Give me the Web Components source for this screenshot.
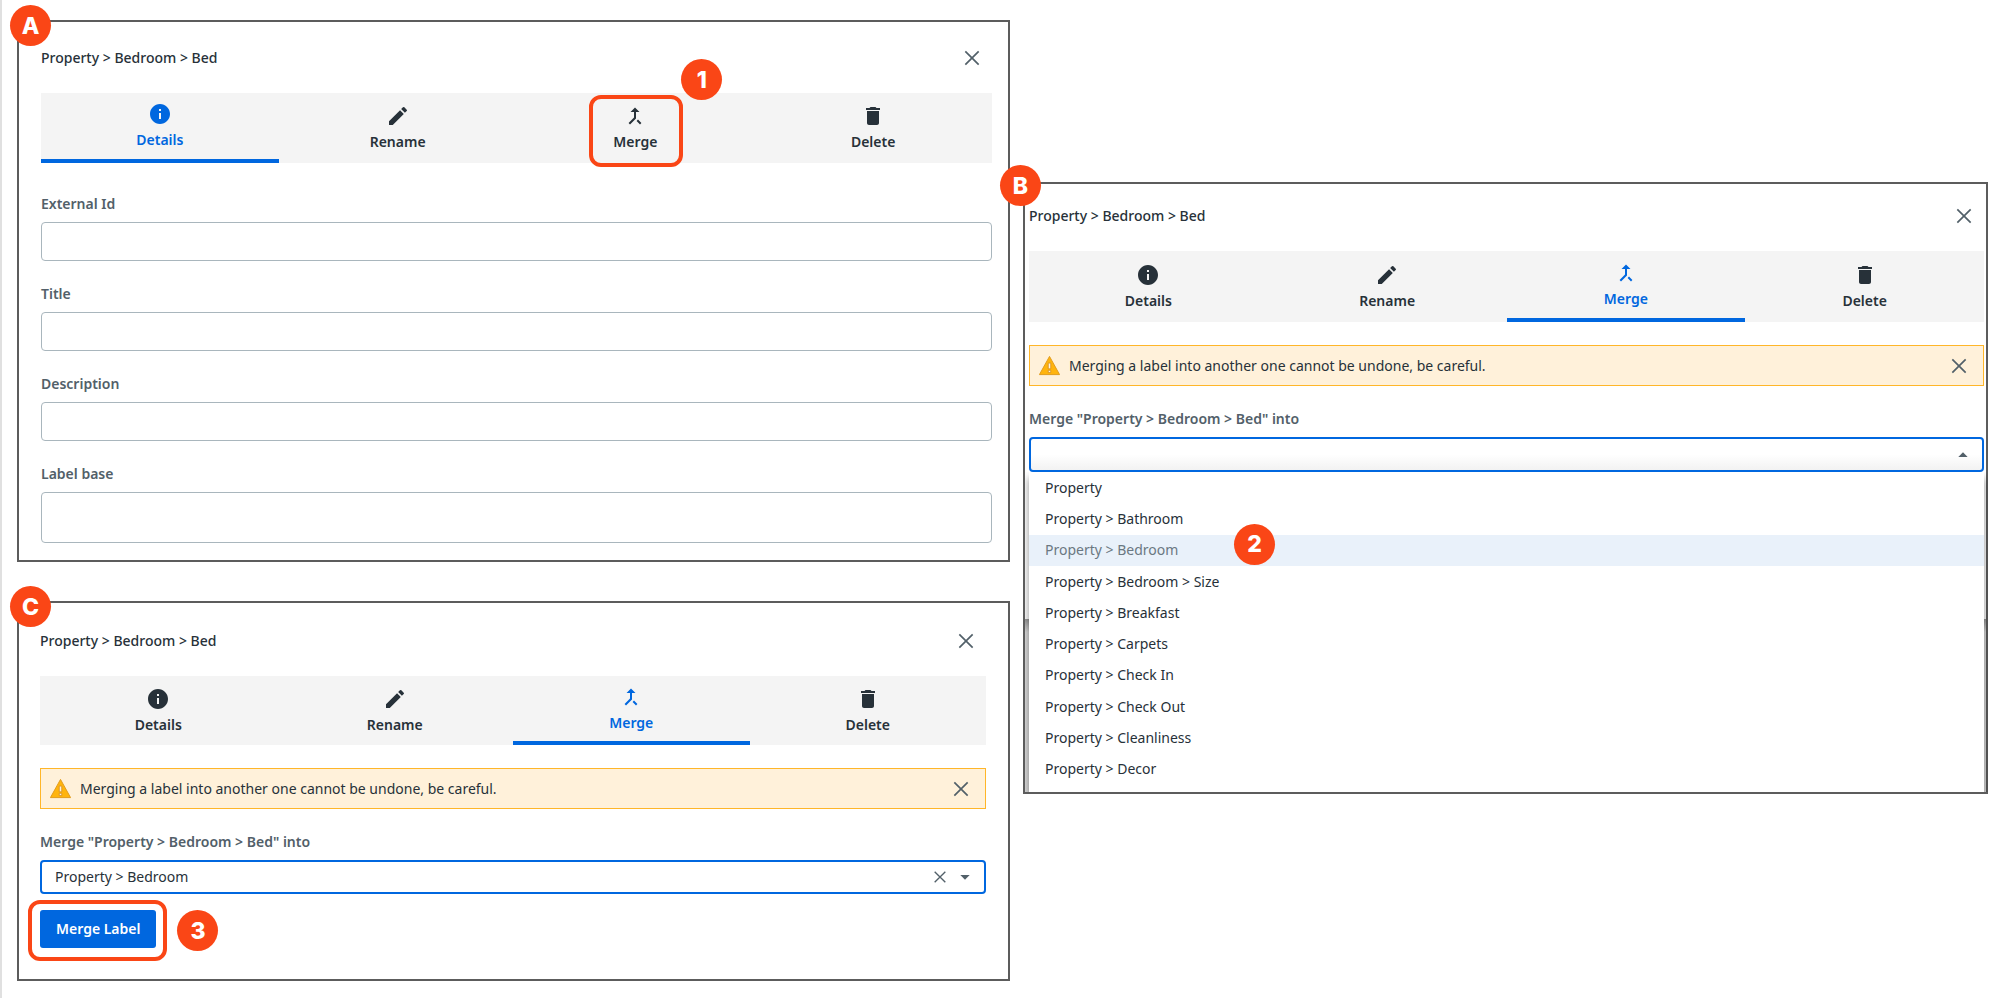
<!DOCTYPE html>
<html lang="en">
<head>
<meta charset="utf-8">
<title>Merging a label</title>
<style>
  body {
    margin: 0;
    font: 14px/20px "Noto Sans", "Open Sans", sans-serif;
    color: #273139;
    background: #fff;
  }
</style>
</head>
<body>
<merge-guide></merge-guide>

<script>
const ICONS = {
  info: '<path fill="currentColor" d="M12 2C6.48 2 2 6.48 2 12s4.48 10 10 10 10-4.48 10-10S17.52 2 12 2zm1 15h-2v-6h2v6zm0-8h-2V7h2v2z"/>',
  edit: '<path fill="currentColor" d="M3 17.25V21h3.75L17.81 9.94l-3.75-3.75L3 17.25zM20.71 7.04a1 1 0 0 0 0-1.41l-2.34-2.34a1 1 0 0 0-1.41 0l-1.83 1.83 3.75 3.75 1.83-1.83z"/>',
  merge: '<path fill="currentColor" d="M17 20.41L18.41 19 15 15.59 13.59 17 17 20.41zM7.5 8H11v5.59L5.59 19 7 20.41l6-6V8h3.5L12 3.5 7.5 8z"/>',
  trash: '<path fill="currentColor" d="M6 19c0 1.1.9 2 2 2h8c1.1 0 2-.9 2-2V7H6v12zM19 4h-3.5l-1-1h-5l-1 1H5v2h14V4z"/>',
  close: '<path fill="none" stroke="currentColor" stroke-width="2" d="M4 4l16 16M20 4L4 20"/>',
  down: '<path fill="currentColor" d="M5 9h14l-7 7z"/>',
  up: '<path fill="currentColor" d="M5 15h14l-7-7z"/>',
  warning: '<path fill="#ffb40e" stroke="#e09a1a" d="M12 2.5L22.5 21.5h-21z"/><path fill="#fff3db" stroke="#d18a1c" stroke-width=".8" d="M10.7 9.5h2.6v6h-2.6zM10.7 17h2.6v2.4h-2.6z"/>'
};

function define(name, render) {
  customElements.define(name, class extends HTMLElement {
    connectedCallback() {
      if (this.shadowRoot) return;
      this.attachShadow({ mode: 'open' }).innerHTML = render(this);
    }
  });
}

const attr = (el, name) => (el.getAttribute(name) || '').replace(/&/g, '&amp;').replace(/"/g, '&quot;').replace(/>/g, '&gt;');

define('ui-icon', el => `
  <style>
    :host { display: block; flex: none; width: var(--size, 24px); height: var(--size, 24px); }
    svg { display: block; width: 100%; height: 100%; }
  </style>
  <svg viewBox="0 0 24 24" aria-hidden="true">${ICONS[el.getAttribute('name')]}</svg>`);

define('step-badge', () => `
  <style>
    :host {
      display: flex; align-items: center; justify-content: center;
      width: 41px; height: 41px; border-radius: 50%;
      background: #fa4616; color: #fff;
      font: 800 23px/24px Inter, "Liberation Sans", sans-serif;
    }
  </style>
  <slot></slot>`);

define('icon-button', el => `
  <style>
    :host { display: block; flex: none; }
    button {
      display: flex; align-items: center; justify-content: center;
      width: var(--button-width, 40px); height: var(--button-height, 40px);
      padding: 0; border: 0; background: none; color: #526069; cursor: pointer;
    }
    ui-icon { --size: var(--glyph, 20px); }
  </style>
  <button type="button" aria-label="${attr(el, 'label')}"><ui-icon name="${el.getAttribute('icon')}"></ui-icon></button>`);

define('label-panel', el => `
  <style>
    :host { display: block; position: relative; box-sizing: border-box; border: 2px solid #5c5c5c; }
    .body { display: flex; flex-direction: column; box-sizing: border-box; height: 100%; padding: var(--panel-padding); }
    header { display: flex; align-items: center; justify-content: space-between; margin-bottom: 15px; }
    h2 { margin: 0; font-size: 14px; font-weight: 500; line-height: 20px; }
    step-badge { position: absolute; z-index: 3; left: var(--badge-left, -9px); top: var(--badge-top, -17px); }
  </style>
  <step-badge>${attr(el, 'step')}</step-badge>
  <div class="body">
    <header>
      <h2>Property &gt; Bedroom &gt; Bed</h2>
      <icon-button icon="close" label="Close"></icon-button>
    </header>
    <slot></slot>
  </div>`);

define('panel-tab', el => `
  <style>
    :host { display: block; position: relative; }
    button {
      display: flex; flex-direction: column; align-items: center; justify-content: center; gap: 4px;
      box-sizing: border-box; width: 100%; height: var(--tab-height, 70px);
      padding: 0; border: 0; background: none; cursor: pointer;
      font: 600 14px/20px "Noto Sans", "Open Sans", sans-serif; color: #273139;
    }
    :host([active]) button { color: #0067df; border-bottom: 4px solid #0067df; }
    .mark {
      position: absolute; box-sizing: border-box; top: 2px; left: calc(50% - 46px);
      width: 94px; height: 72px; border: 4px solid #fa4616; border-radius: 12px; pointer-events: none;
    }
    step-badge { position: absolute; top: -34px; left: calc(50% + 46px); }
  </style>
  <button type="button" role="tab" aria-selected="${el.hasAttribute('active')}">
    <ui-icon name="${el.getAttribute('icon')}"></ui-icon><span><slot></slot></span>
  </button>
  ${el.hasAttribute('step') ? `<div class="mark"></div><step-badge>${attr(el, 'step')}</step-badge>` : ''}`);

define('panel-tabs', el => {
  const active = el.getAttribute('active');
  const tab = (icon, text) => `<panel-tab icon="${icon}"${active === text ? ' active' : ''}${text === 'Merge' && el.hasAttribute('step') ? ` step="${attr(el, 'step')}"` : ''}>${text}</panel-tab>`;
  return `
  <style>
    :host { display: block; background: #f4f4f4; }
    div { display: grid; grid-template-columns: repeat(4, 1fr); }
  </style>
  <div role="tablist">${tab('info', 'Details')}${tab('edit', 'Rename')}${tab('merge', 'Merge')}${tab('trash', 'Delete')}</div>`;
});

define('text-field', el => `
  <style>
    :host { display: flex; flex-direction: column; gap: 8px; }
    label { font-weight: 600; color: #526069; }
    input {
      box-sizing: border-box; width: 100%; height: var(--field-height, 39px);
      padding: 0 12px; border: 1px solid #a9b6bd; border-radius: 4px; outline: 0;
      background: #fff; font: inherit; color: inherit;
    }
  </style>
  <label for="field">${attr(el, 'label')}</label>
  <input id="field" type="text">`);

define('warning-bar', () => `
  <style>
    :host {
      display: flex; align-items: center; box-sizing: border-box; height: 41px;
      margin: 23px 0; padding: 0 4px 0 8px;
      border: 1px solid #ffb629; background: #fff1da;
    }
    ui-icon { --size: 23px; margin-right: 8px; }
    span { flex: 1; }
    icon-button { --button-height: 38px; }
  </style>
  <ui-icon name="warning"></ui-icon>
  <span>Merging a label into another one cannot be undone, be careful.</span>
  <icon-button icon="close" label="Dismiss"></icon-button>`);

define('label-select', el => {
  const value = attr(el, 'value');
  return `
  <style>
    :host { display: flex; flex-direction: column; gap: 8px; }
    label { font-weight: 600; color: #526069; }
    .box {
      display: flex; align-items: center; box-sizing: border-box; height: var(--select-height, 35px); padding-right: 11px;
      border: 2px solid #0067df; border-radius: 4px; background: #fff; color: #526069;
    }
    :host([open]) .box { background: linear-gradient(#fff 50%, #f2f2f2); }
    select {
      appearance: none; flex: 1; min-width: 0; height: 100%; padding: 0 13px; margin: 0;
      border: 0; outline: 0; background: none; font: inherit; color: #273139;
    }
    icon-button { --button-width: 28px; --button-height: 30px; --glyph: 16px; margin-right: 3px; }
    ui-icon { --size: 16px; }
  </style>
  <label for="target">Merge "Property &gt; Bedroom &gt; Bed" into</label>
  <div class="box">
    <select id="target"><option>${value}</option></select>
    ${value ? '<icon-button icon="close" label="Clear"></icon-button>' : ''}
    <ui-icon name="${el.hasAttribute('open') ? 'up' : 'down'}"></ui-icon>
  </div>`;
});

define('option-list', el => `
  <style>
    :host { display: block; flex: 1; position: relative; box-shadow: 0 6px 8px rgba(0, 0, 0, .45); clip-path: inset(0 -4px 0 -4px); }
    ul { display: grid; grid-auto-rows: 1fr; box-sizing: border-box; height: 100%; margin: 0; padding: 0 0 7px; list-style: none; background: #fff; }
    li { display: flex; align-items: center; position: relative; padding-left: 16px; }
    li[aria-selected="true"] { background: #e9f1fa; color: #6b7882; }
    step-badge { position: absolute; left: 205px; top: -11px; }
  </style>
  <ul role="listbox" aria-label="Labels">${[
    'Property', 'Property > Bathroom', 'Property > Bedroom', 'Property > Bedroom > Size', 'Property > Breakfast',
    'Property > Carpets', 'Property > Check In', 'Property > Check Out', 'Property > Cleanliness', 'Property > Decor'
  ].map(text => {
    const on = text === el.getAttribute('selected');
    return `<li role="option" aria-selected="${on}">${text.replace(/>/g, '&gt;')}${on ? '<step-badge>2</step-badge>' : ''}</li>`;
  }).join('')}</ul>`);

define('primary-action', el => `
  <style>
    :host { display: block; position: relative; align-self: flex-start; margin-top: 16px; }
    button {
      height: 38px; padding: 0 16px; border: 0; border-radius: 3px; cursor: pointer;
      background: #0067df; color: #fff; font: 600 14px/20px "Noto Sans", "Open Sans", sans-serif; display: block;
    }
    .mark { position: absolute; inset: -10px -11px -13px -12px; border: 4px solid #fa4616; border-radius: 12px; pointer-events: none; }
    step-badge { position: absolute; left: calc(100% + 21px); top: 0; }
  </style>
  <button type="button"><slot></slot></button>
  <div class="mark"></div>
  <step-badge>${attr(el, 'step')}</step-badge>`);

define('merge-guide', () => `
  <style>
    :host {
      display: grid; grid-template-columns: minmax(0, 993fr) minmax(0, 965fr); column-gap: 13px; align-items: start;
      padding: 20px 13px 17px 15px; border-left: 2px solid #e0e0e0;
    }
    .left { display: grid; row-gap: 39px; }
    .fields { display: grid; row-gap: 23px; margin-top: 31px; }
    .tall { --field-height: 51px; }
    .a { --panel-padding: 16px 16px 17px 22px; }
    .b {
      --panel-padding: 12px 2px 0 4px; --badge-left: -25px; --badge-top: -19px; --tab-height: 71px;
      min-height: 612px; margin-top: 162px; display: grid;
      background: linear-gradient(#fff 435px, #999 435px, #ddd 448px);
    }
    .c { --panel-padding: 18px 22px 31px 21px; --tab-height: 69px; --select-height: 34px; }
  </style>
  <div class="left">
    <label-panel class="a" step="A">
      <panel-tabs active="Details" step="1"></panel-tabs>
      <div class="fields">
        <text-field label="External Id"></text-field>
        <text-field label="Title"></text-field>
        <text-field label="Description"></text-field>
        <text-field class="tall" label="Label base"></text-field>
      </div>
    </label-panel>
    <label-panel class="c" step="C">
      <panel-tabs active="Merge"></panel-tabs>
      <warning-bar></warning-bar>
      <label-select value="Property > Bedroom"></label-select>
      <primary-action step="3">Merge Label</primary-action>
    </label-panel>
  </div>
  <label-panel class="b" step="B">
    <panel-tabs active="Merge"></panel-tabs>
    <warning-bar></warning-bar>
    <label-select open value=""></label-select>
    <option-list selected="Property > Bedroom"></option-list>
  </label-panel>`);
</script>
</body>
</html>
